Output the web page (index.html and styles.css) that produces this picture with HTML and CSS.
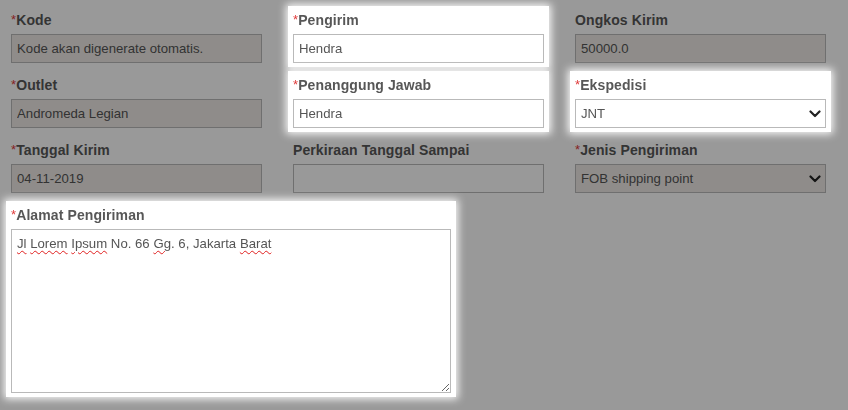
FILE: index.html
```html
<!DOCTYPE html>
<html lang="id">
<head>
<meta charset="utf-8">
<title>Form Pengiriman</title>
<link rel="stylesheet" href="styles.css">
</head>
<body>
<div class="overlay"></div>
<form class="form">
  <div class="field">
    <label class="lbl"><span class="req">*</span>Kode</label>
    <input class="ctl ro" type="text" value="Kode akan digenerate otomatis." readonly>
  </div>
  <div class="field spot">
    <label class="lbl"><span class="req">*</span>Pengirim</label>
    <input class="ctl" type="text" value="Hendra">
  </div>
  <div class="field">
    <label class="lbl">Ongkos Kirim</label>
    <input class="ctl ro" type="text" value="50000.0" readonly>
  </div>

  <div class="field">
    <label class="lbl"><span class="req">*</span>Outlet</label>
    <input class="ctl ro" type="text" value="Andromeda Legian" readonly>
  </div>
  <div class="field spot">
    <label class="lbl"><span class="req">*</span>Penanggung Jawab</label>
    <input class="ctl" type="text" value="Hendra">
  </div>
  <div class="field spot">
    <label class="lbl"><span class="req">*</span>Ekspedisi</label>
    <div class="selwrap">
      <select class="ctl sel"><option>JNT</option></select>
      <svg class="chev" width="12" height="8" viewBox="0 0 12 8"><path d="M1.5 1.5 L6 6 L10.5 1.5" fill="none" stroke="#222" stroke-width="2.2" stroke-linecap="round" stroke-linejoin="round"/></svg>
    </div>
  </div>

  <div class="field">
    <label class="lbl"><span class="req">*</span>Tanggal Kirim</label>
    <input class="ctl ro" type="text" value="04-11-2019" readonly>
  </div>
  <div class="field">
    <label class="lbl">Perkiraan Tanggal Sampai</label>
    <input class="ctl" type="text" value="">
  </div>
  <div class="field">
    <label class="lbl"><span class="req">*</span>Jenis Pengiriman</label>
    <div class="selwrap">
      <select class="ctl sel ro"><option>FOB shipping point</option></select>
      <svg class="chev" width="12" height="8" viewBox="0 0 12 8"><path d="M1.5 1.5 L6 6 L10.5 1.5" fill="none" stroke="#222" stroke-width="2.2" stroke-linecap="round" stroke-linejoin="round"/></svg>
    </div>
  </div>

  <div class="field wide spot">
    <label class="lbl"><span class="req">*</span>Alamat Pengiriman</label>
    <div class="area"><span class="typo">Jl</span> <span class="typo">Lorem</span> <span class="typo">Ipsum</span> No. 66 <span class="typo">Gg</span>. 6, Jakarta <span class="typo">Barat</span></div>
  </div>
</form>
</body>
</html>
```

FILE: styles.css
```css
html, body {
  margin: 0;
  padding: 0;
  background: #ffffff;
}

body {
  padding: 10px 11px;
  font-family: "Liberation Sans", Arial, sans-serif;
  color: #555;
  height: 410px;
  box-sizing: border-box;
  overflow: hidden;
}

.overlay {
  position: fixed;
  inset: 0;
  background: rgba(0, 0, 0, 0.4);
  z-index: 10;
}

.form {
  display: grid;
  grid-template-columns: 251px 251px 251px;
  column-gap: 31px;
  row-gap: 12px;
  margin: 0;
}

.field {
  display: flex;
  flex-direction: column;
}

.spot {
  position: relative;
  z-index: 20;
  background: #fff;
  margin: -4px -5px;
  padding: 4px 5px;
  box-shadow: 0 0 8px 2px rgba(255, 255, 255, 0.95);
}

.lbl {
  display: block;
  font-size: 14px;
  font-weight: bold;
  line-height: 20px;
  height: 20px;
  margin-bottom: 4px;
  color: #575757;
  letter-spacing: 0.1px;
  white-space: nowrap;
}

.req {
  color: #e03a3a;
  font-weight: normal;
  font-size: 13px;
  position: relative;
  top: -1px;
}

.ctl {
  box-sizing: border-box;
  width: 251px;
  height: 29px;
  margin: 0;
  border: 1px solid #b9b9b9;
  border-radius: 0;
  background: #fff;
  font-family: "Liberation Sans", Arial, sans-serif;
  font-size: 13.2px;
  color: #555;
  padding: 0 5px;
  outline: none;
}

.ro {
  background: #eeeae6;
}

.selwrap {
  position: relative;
  width: 251px;
  height: 29px;
}

.sel {
  appearance: none;
  -webkit-appearance: none;
  padding: 0 5px;
}

.chev {
  position: absolute;
  right: 5px;
  top: 11px;
  pointer-events: none;
}

.wide {
  grid-column: 1 / span 2;
  justify-self: start;
}

.area {
  box-sizing: border-box;
  width: 440px;
  height: 164px;
  border: 1px solid #b9b9b9;
  background: #fff;
  font-size: 13.2px;
  line-height: 17px;
  color: #555;
  padding: 5px 5px;
  resize: both;
  overflow: auto;
}

.typo {
  text-decoration: underline wavy #e02020;
  text-decoration-thickness: 1px;
  text-underline-offset: 2px;
}
```
